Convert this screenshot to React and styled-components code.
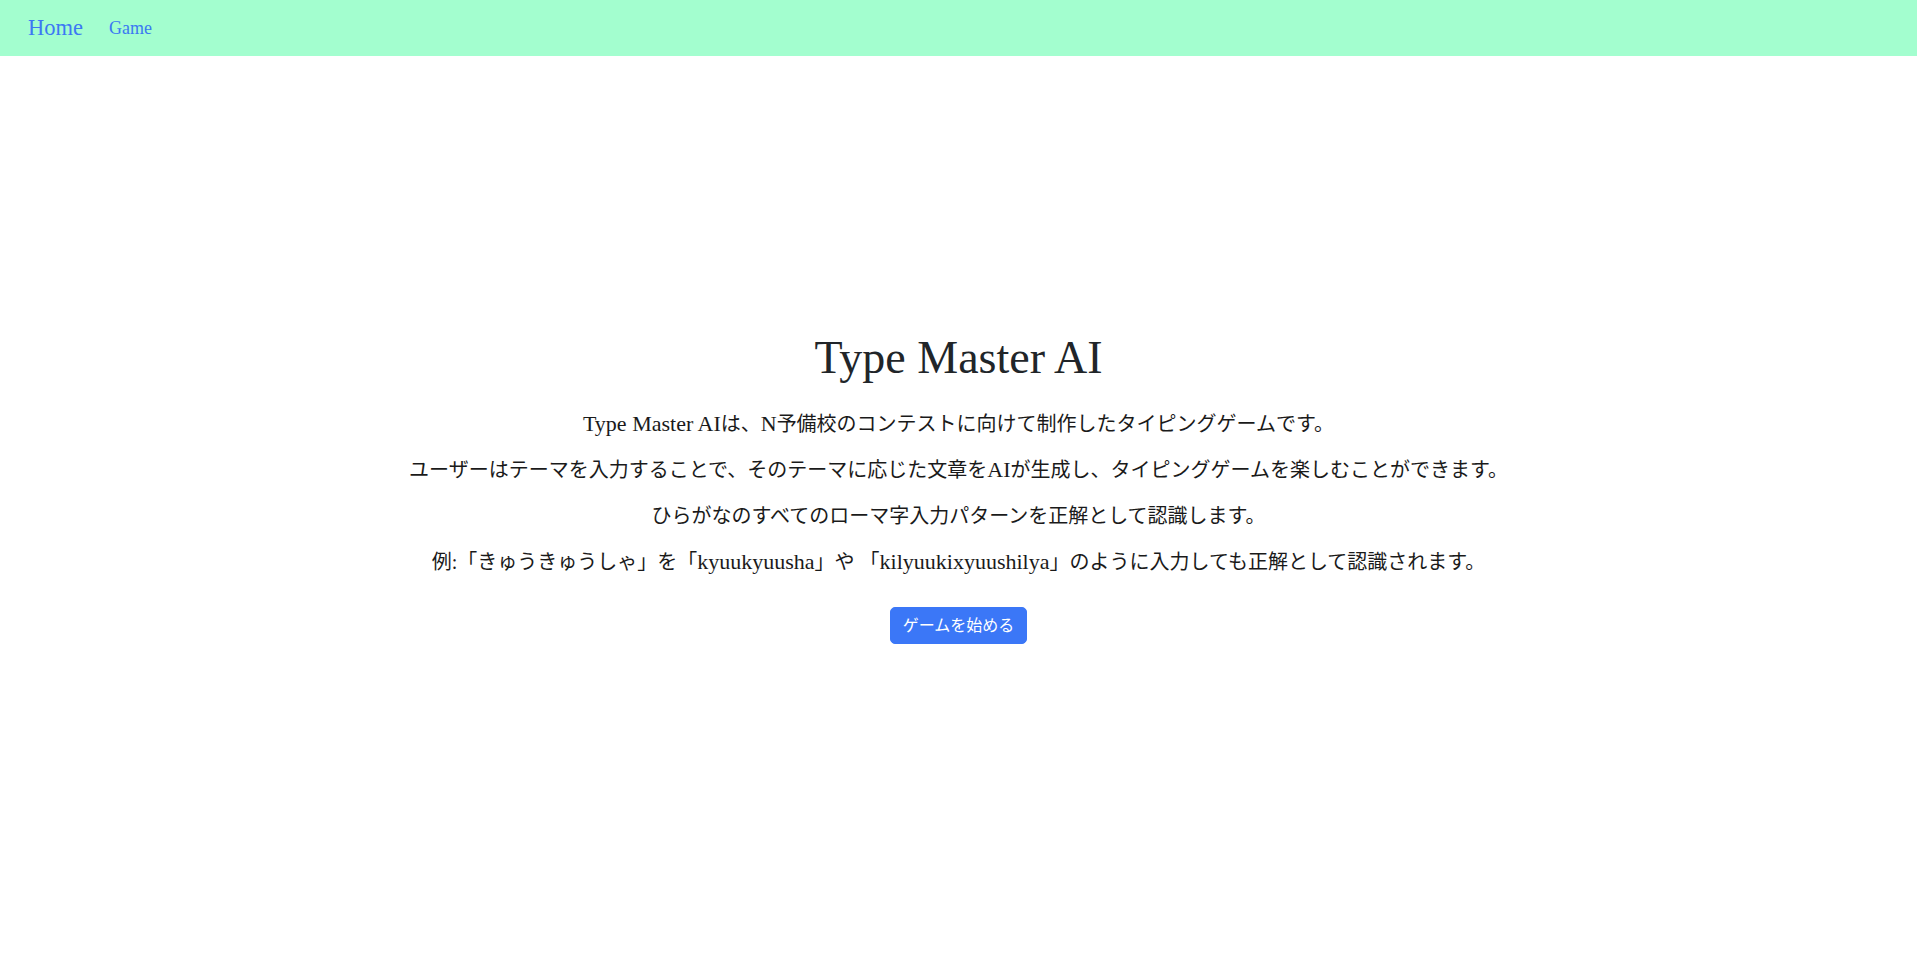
import React from "react";
import styled, { createGlobalStyle } from "styled-components";

const GlobalStyle = createGlobalStyle`
  *, *::before, *::after { box-sizing: border-box; }
  html, body {
    margin: 0;
    padding: 0;
    background: #ffffff;
    color: #212529;
    font-family: "Liberation Serif", "Noto Sans CJK JP", serif;
  }
`;

const NavBar = styled.nav`
  height: 56px;
  background: #a3fecf;
  display: flex;
  align-items: center;
  gap: 26px;
  padding: 0 28px;
`;

const NavLink = styled.a`
  color: ${(p) => (p.$brand ? "#3c78f4" : "#3a78f2")};
  font-size: ${(p) => (p.$brand ? "22.5px" : "18px")};
  text-decoration: none;
  cursor: pointer;
`;

const Main = styled.main`
  padding-top: 274px;
  display: flex;
  flex-direction: column;
  align-items: center;
  text-align: center;
`;

const Title = styled.h1`
  margin: 0 0 24px;
  font-size: 46px;
  font-weight: 400;
  line-height: 1.2;
  color: #212529;
`;

const Paragraph = styled.p`
  margin: 0 0 16px;
  font-size: 20px;
  line-height: 30px;
  color: #1a1a1a;
`;

const Latin = styled.span`
  font-size: 22px;
  line-height: 1;
`;

const StartButton = styled.button`
  margin-top: 14px;
  height: 37px;
  padding: 0 12px;
  display: inline-flex;
  align-items: center;
  justify-content: center;
  background: #3b77f7;
  color: #ffffff;
  border: 1px solid #3b77f7;
  border-radius: 5px;
  font-family: "Liberation Serif", "Noto Sans CJK JP", serif;
  font-size: 16px;
  line-height: 24px;
  cursor: pointer;
`;

const lines = [
  "Type Master AIは、N予備校のコンテストに向けて制作したタイピングゲームです。",
  "ユーザーはテーマを入力することで、そのテーマに応じた文章をAIが生成し、タイピングゲームを楽しむことができます。",
  "ひらがなのすべてのローマ字入力パターンを正解として認識します。",
  "例:「きゅうきゅうしゃ」を「kyuukyuusha」や 「kilyuukixyuushilya」のように入力しても正解として認識されます。",
];

function renderLine(text) {
  const parts = text.split(/([A-Za-z](?:[A-Za-z ]*[A-Za-z])?)/);
  return parts.map((part, i) =>
    i % 2 === 1 ? <Latin key={i}>{part}</Latin> : <React.Fragment key={i}>{part}</React.Fragment>
  );
}

export default function App() {
  return (
    <>
      <GlobalStyle />
      <NavBar>
        <NavLink $brand>Home</NavLink>
        <NavLink>Game</NavLink>
      </NavBar>
      <Main>
        <Title>Type Master AI</Title>
        {lines.map((l, i) => (
          <Paragraph key={i}>{renderLine(l)}</Paragraph>
        ))}
        <StartButton>ゲームを始める</StartButton>
      </Main>
    </>
  );
}
